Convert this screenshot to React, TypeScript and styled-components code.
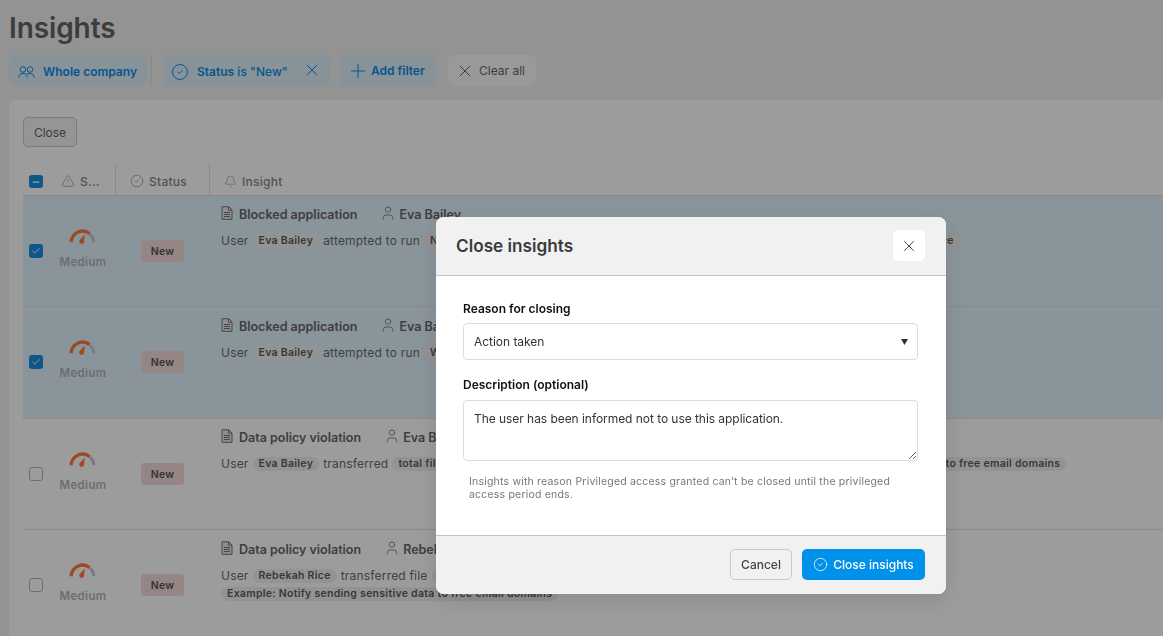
import React from "react";
import styled, { createGlobalStyle } from "styled-components";
import { Bell, CircleCheck, Check, Minus, Plus, TriangleAlert, User, X } from "lucide-react";

const Global = createGlobalStyle`
  html, body { margin: 0; padding: 0; height: 100%; overflow: hidden; }
  body { font-family: Inter, "Liberation Sans", sans-serif; color: #333; background: #f1f1f1; }
  * { box-sizing: border-box; }
`;

const Page = styled.div`
  height: 100vh;
  overflow: hidden;
  padding: 10px 0 0 9px;
  display: flex;
  flex-direction: column;
`;
const Title = styled.h1`
  margin: 0;
  font-size: 28px;
  line-height: 36px;
  font-weight: 600;
  color: #646464;
  letter-spacing: -0.1px;
`;
const Filters = styled.div`
  display: flex;
  align-items: stretch;
  height: 31px;
  margin-top: 9px;
`;
const Chip = styled.div<{ $neutral?: boolean; $strong?: boolean }>`
  display: flex;
  align-items: center;
  gap: 8px;
  padding: 2px 9px 0;
  border-radius: 6px;
  font-size: 12px;
  font-weight: ${(p) => (p.$strong ? 600 : 500)};
  background: ${(p) => (p.$neutral ? "#fafafa" : "#def0fb")};
  color: ${(p) => (p.$neutral ? "#666" : "#0a8ce6")};
  white-space: nowrap;
`;
const CompanyChip = styled(Chip)`
  width: 138px;
`;
const FilterDivider = styled.div`
  width: 1px;
  background: #e0e0e0;
  margin: 0 11px 0 4px;
`;
const StatusChip = styled(Chip)`
  padding: 0;
  gap: 0;
  width: 167px;
  margin-right: 10px;
`;
const StatusLabel = styled.div`
  display: flex;
  align-items: center;
  gap: 8px;
  padding: 2px 0 0 8px;
  height: 100%;
  width: 134px;
  border-right: 1px solid #d9ebf7;
`;
const StatusClose = styled.div`
  flex: 1;
  display: flex;
  align-items: center;
  justify-content: center;
  padding-right: 3px;
  margin-top: -2px;
`;
const AddChip = styled(Chip)`
  width: 97px;
  margin-right: 11px;
  gap: 2px;
  padding: 0 0 0 7px;
`;
const ClearChip = styled(Chip)`
  width: 88px;
  padding: 0 0 0 7px;
  gap: 4px;
  font-weight: 400;
`;
const Panel = styled.div`
  flex: 1;
  margin-top: 14px;
  background: #fff;
  border-radius: 8px 0 0 0;
  padding: 17px 0 0 14px;
  min-height: 0;
  overflow: hidden;
`;
const OutlineButton = styled.button`
  height: 30px;
  width: 54px;
  padding: 0;
  font: 400 12px Inter, sans-serif;
  color: #666;
  background: #f4f4f4;
  border: 1px solid #c9c9c9;
  border-radius: 5px;
  display: block;
`;
const HeadRow = styled.div`
  display: grid;
  grid-template-columns: 29px 64px 94px 1fr;
  height: 32px;
  margin-top: 17px;
  align-items: center;
  border-bottom: 1px solid #e0e0e0;
  font-size: 12px;
  font-weight: 500;
  color: #888;
`;
const HeadCell = styled.div<{ $line?: boolean }>`
  display: flex;
  align-items: center;
  gap: 5px;
  height: 100%;
  padding: 3px 0 0 ${(p) => (p.$line ? 14 : 10)}px;
  border-right: ${(p) => (p.$line ? "1px solid #e0e0e0" : "0")};
  letter-spacing: 0.25px;
`;
const CheckCell = styled.div`
  padding: 4px 0 0 6px;
  display: flex;
  align-items: center;
`;
const Box = styled.div<{ $on?: boolean }>`
  width: 13.5px;
  height: 13.5px;
  border-radius: 3px;
  display: flex;
  align-items: center;
  justify-content: center;
  background: ${(p) => (p.$on ? "#1b8fe0" : "#fff")};
  border: ${(p) => (p.$on ? "0" : "1px solid #b4b4b4")};
  color: #fff;
`;
const Row = styled.div<{ $selected?: boolean; $height: number }>`
  display: grid;
  grid-template-columns: 29px 64px 94px 1fr;
  height: ${(p) => p.$height}px;
  background: ${(p) => (p.$selected ? "#e2f3fe" : "#fff")};
  border-bottom: 1px solid #e2e2e2;
`;
const SideCell = styled.div`
  display: flex;
  align-items: center;
  justify-content: center;
  height: 110px;
`;
const BoxCell = styled(SideCell)`
  justify-content: flex-start;
  padding-left: 6px;
`;
const SeverityStack = styled.div`
  display: flex;
  flex-direction: column;
  align-items: center;
  gap: 11px;
  font-size: 11.5px;
  font-weight: 600;
  color: #b4b4b4;
  letter-spacing: 0.3px;
  padding: 0 2px 6px 0;
`;
const NewBadge = styled.div`
  width: 43px;
  height: 22px;
  border-radius: 3px;
  background: #f6dada;
  font-size: 10.5px;
  font-weight: 600;
  color: #555;
  display: flex;
  align-items: center;
  justify-content: center;
  letter-spacing: 0.3px;
  margin-left: -1px;
`;
const InsightCell = styled.div<{ $top: number }>`
  padding: ${(p) => p.$top}px 0 0 11px;
  white-space: nowrap;
  min-width: 0;
`;
const InsightTitle = styled.div`
  display: flex;
  align-items: center;
  font-size: 12.5px;
  font-weight: 600;
  color: #666;
  height: 17px;
`;
const DocMark = styled.svg`
  width: 12px;
  height: 14px;
  margin: -3px 6px 0 0;
`;
const Person = styled.span`
  display: inline-flex;
  align-items: center;
  gap: 3px;
  margin-left: 23px;
`;
const Sentence = styled.div`
  display: flex;
  align-items: center;
  gap: 4px;
  font-size: 12px;
  color: #6a6a6a;
  margin-top: 9px;
  height: 16px;
  letter-spacing: 0.2px;
`;
const Token = styled.span`
  display: inline-block;
  margin-top: 2px;
  padding: 0 6px;
  font-size: 10.5px;
  line-height: 14px;
  font-weight: 600;
  letter-spacing: 0.28px;
  color: #5c5c5c;
  background: #f0f0f0;
  border-radius: 7px;
`;
const SecondLine = styled.div`
  margin-top: -2px;
`;

const Overlay = styled.div`
  position: fixed;
  inset: 0;
  background: rgba(0, 0, 0, 0.39);
  backdrop-filter: blur(0.4px);
  display: flex;
  justify-content: center;
  align-items: flex-start;
  padding: 217px 0 0 219px;
`;
const Modal = styled.div`
  width: 510px;
  height: 377px;
  background: #fff;
  border-radius: 8px;
  overflow: hidden;
  display: flex;
  flex-direction: column;
  box-shadow: 0 6px 24px rgba(0, 0, 0, 0.12);
`;
const ModalHead = styled.div`
  height: 59px;
  background: #f1f1f1;
  border-bottom: 1px solid #c4c4c4;
  display: flex;
  align-items: center;
  justify-content: space-between;
  padding: 0 21px 1px 20px;
`;
const ModalTitle = styled.h2`
  margin: 0;
  font-size: 17.2px;
  font-weight: 600;
  color: #3a3a3a;
`;
const IconButton = styled.button`
  width: 32px;
  height: 31px;
  border: 0;
  padding: 0;
  border-radius: 5px;
  background: #fff;
  color: #444;
  display: flex;
  align-items: center;
  justify-content: center;
`;
const ModalBody = styled.div`
  flex: 1;
  padding: 25px 28px 0 27px;
`;
const Label = styled.label<{ $gap: number }>`
  display: block;
  font-size: 12px;
  line-height: 15px;
  font-weight: 600;
  color: #111;
  margin-bottom: ${(p) => p.$gap}px;
`;
const SelectWrap = styled.div`
  position: relative;
  margin-bottom: 17px;
`;
const Select = styled.select`
  appearance: none;
  display: block;
  width: 100%;
  height: 37px;
  padding: 0 10px;
  font: 400 12px Inter, sans-serif;
  letter-spacing: -0.03px;
  color: #333;
  background: #fff;
  border: 1px solid #dcdcdc;
  border-radius: 4px;
`;
const Caret = styled.svg`
  position: absolute;
  right: 10px;
  top: 16px;
  width: 7px;
  height: 6px;
  pointer-events: none;
`;
const TextArea = styled.textarea`
  display: block;
  width: 100%;
  height: 61px;
  padding: 10px;
  font: 400 12px/16px Inter, sans-serif;
  letter-spacing: -0.05px;
  color: #333;
  border: 1px solid #dcdcdc;
  border-radius: 4px;
  outline: none;
`;
const Help = styled.p`
  margin: 14px 6px 0;
  font-size: 10.5px;
  line-height: 13px;
  letter-spacing: 0.2px;
  color: #777;
`;
const ModalFoot = styled.div`
  height: 59px;
  background: #f1f1f1;
  border-top: 1px solid #c4c4c4;
  display: flex;
  align-items: center;
  justify-content: flex-end;
  gap: 10px;
  padding: 0 21px 2px 0;
`;
const CancelButton = styled.button`
  width: 62px;
  height: 31px;
  font: 500 12px Inter, sans-serif;
  color: #444;
  background: #f1f1f1;
  border: 1px solid #c9c9c9;
  border-radius: 5px;
`;
const PrimaryButton = styled.button`
  width: 123px;
  height: 31px;
  font: 500 12px Inter, sans-serif;
  color: #fff;
  background: #0091ea;
  border: 0;
  border-radius: 5px;
  display: flex;
  align-items: center;
  justify-content: center;
  gap: 5px;
`;

const Gauge = () => (
  <svg width="27" height="16" viewBox="0 0 28 16" fill="none">
    <path d="M2.300 14.500 A11.700 11.700 0 0 1 21.500 5.700" stroke="#ff7a3c" strokeWidth="3.4" />
    <path d="M22 6.200 A11.700 11.700 0 0 1 25.700 14.500" stroke="#c8c8c8" strokeWidth="3" />
    <path d="M16.500 6.500 L15.600 13.200 A2.500 2.500 0 1 1 11.500 11.700 Z" fill="#ff7a3c" />
  </svg>
);

const Doc = () => (
  <DocMark viewBox="0 0 12 14" fill="none">
    <path d="M1 .7h6.700L11 4v9.300H1z" fill="#e6e6e6" stroke="#777" strokeWidth="1" />
    <path d="M7.500 1v3.200H11M3 6.500h6M3 8.500h6M3 10.500h6" stroke="#777" strokeWidth="1" />
  </DocMark>
);

const People = () => (
  <svg width="17" height="14" viewBox="0 0 17 14" fill="none" stroke="currentColor" strokeWidth="1">
    <circle cx="5" cy="4.500" r="2.800" />
    <circle cx="12" cy="4.500" r="2.800" />
    <path d="M.7 12.500c.3-2.500 1.600-4 4.300-4s4 1.500 4.300 4M8.600 9c.8-.4 2-.6 3.400-.5 2.600 0 3.900 1.500 4.200 4" />
  </svg>
);

type RowData = {
  id: string;
  title: string;
  person: string;
  selected?: boolean;
  height: number;
  top: number;
  sentence: React.ReactNode;
  second?: string;
};

const rows: RowData[] = [
  {
    id: "a",
    title: "Blocked application",
    person: "Eva Bailey",
    selected: true,
    height: 111,
    top: 10,
    sentence: (
      <>
        <span>User</span> <Token>Eva Bailey</Token> <span>attempted to run</span> <Token>Notion</Token> <span>on device</span> <Token>MacBook Pro</Token> <span>blocked by policy</span> <Token>Example: Block application on the device</Token>
      </>
    ),
  },
  {
    id: "b",
    title: "Blocked application",
    person: "Eva Bailey",
    selected: true,
    height: 112,
    top: 11,
    sentence: (
      <>
        <span>User</span> <Token>Eva Bailey</Token> <span>attempted to run</span> <Token>WhatsApp</Token>
      </>
    ),
  },
  {
    id: "c",
    title: "Data policy violation",
    person: "Eva Bailey",
    height: 111,
    top: 10,
    sentence: (
      <>
        <span>User</span> <Token>Eva Bailey</Token> <span>transferred</span> <Token>total files: 124</Token> <span>to</span> <Token>gmail.com</Token> <span>matching our data policies</span> <Token>Example: Notify sending sensitive data to free email domains</Token>
      </>
    ),
  },
  {
    id: "d",
    title: "Data policy violation",
    person: "Rebekah Rice",
    height: 111,
    top: 11,
    sentence: (
      <>
        <span>User</span> <Token>Rebekah Rice</Token> <span>transferred file</span> <Token>report.xlsx</Token>
      </>
    ),
    second: "Example: Notify sending sensitive data to free email domains",
  },
];

export default function App() {
  return (
    <>
      <Global />
      <Page>
        <Title>Insights</Title>
        <Filters>
          <CompanyChip $strong>
            <People />
            Whole company
          </CompanyChip>
          <FilterDivider />
          <StatusChip>
            <StatusLabel>
              <CircleCheck size={18} strokeWidth={1.3} />
              <span>
                <strong style={{ fontWeight: 600 }}>Status</strong> is "New"
              </span>
            </StatusLabel>
            <StatusClose>
              <X size={20} strokeWidth={1.2} />
            </StatusClose>
          </StatusChip>
          <AddChip $strong>
            <Plus size={22} strokeWidth={1.1} />
            Add filter
          </AddChip>
          <ClearChip $neutral>
            <X size={20} strokeWidth={1.2} />
            Clear all
          </ClearChip>
        </Filters>
        <Panel>
          <OutlineButton>Close</OutlineButton>
          <HeadRow>
            <CheckCell>
              <Box $on>
                <Minus size={10} strokeWidth={3} />
              </Box>
            </CheckCell>
            <HeadCell $line>
              <TriangleAlert size={14} strokeWidth={1.1} style={{ marginLeft: -5 }} />
              S...
            </HeadCell>
            <HeadCell $line>
              <CircleCheck size={14} strokeWidth={1.1} />
              Status
            </HeadCell>
            <HeadCell>
              <Bell size={13} strokeWidth={1} style={{ marginLeft: 4 }} />
              Insight
            </HeadCell>
          </HeadRow>
          {rows.map((r) => (
            <Row key={r.id} $selected={r.selected} $height={r.height}>
              <BoxCell>
                <Box $on={r.selected}>{r.selected && <Check size={10} strokeWidth={2.2} />}</Box>
              </BoxCell>
              <SideCell>
                <SeverityStack>
                  <Gauge />
                  Medium
                </SeverityStack>
              </SideCell>
              <SideCell>
                <NewBadge>New</NewBadge>
              </SideCell>
              <InsightCell $top={r.top}>
                <InsightTitle>
                  <Doc />
                  {r.title}
                  <Person>
                    <User size={16} strokeWidth={1.1} style={{ marginTop: -3 }} />
                    {r.person}
                  </Person>
                </InsightTitle>
                <Sentence>{r.sentence}</Sentence>
                {r.second && (
                  <SecondLine>
                    <Token>{r.second}</Token>
                  </SecondLine>
                )}
              </InsightCell>
            </Row>
          ))}
        </Panel>
      </Page>
      <Overlay>
        <Modal>
          <ModalHead>
            <ModalTitle>Close insights</ModalTitle>
            <IconButton aria-label="Close">
              <X size={18} strokeWidth={1.3} />
            </IconButton>
          </ModalHead>
          <ModalBody>
            <Label $gap={7}>Reason for closing</Label>
            <SelectWrap>
              <Select defaultValue="Action taken">
                <option>Action taken</option>
              </Select>
              <Caret viewBox="0 0 7 6">
                <path d="M0 0h7L3.500 6z" fill="#333" />
              </Caret>
            </SelectWrap>
            <Label $gap={8}>Description (optional)</Label>
            <TextArea readOnly defaultValue="The user has been informed not to use this application." />
            <Help>Insights with reason Privileged access granted can’t be closed until the privileged access period ends.</Help>
          </ModalBody>
          <ModalFoot>
            <CancelButton>Cancel</CancelButton>
            <PrimaryButton>
              <CircleCheck size={15} strokeWidth={1.2} />
              Close insights
            </PrimaryButton>
          </ModalFoot>
        </Modal>
      </Overlay>
    </>
  );
}
